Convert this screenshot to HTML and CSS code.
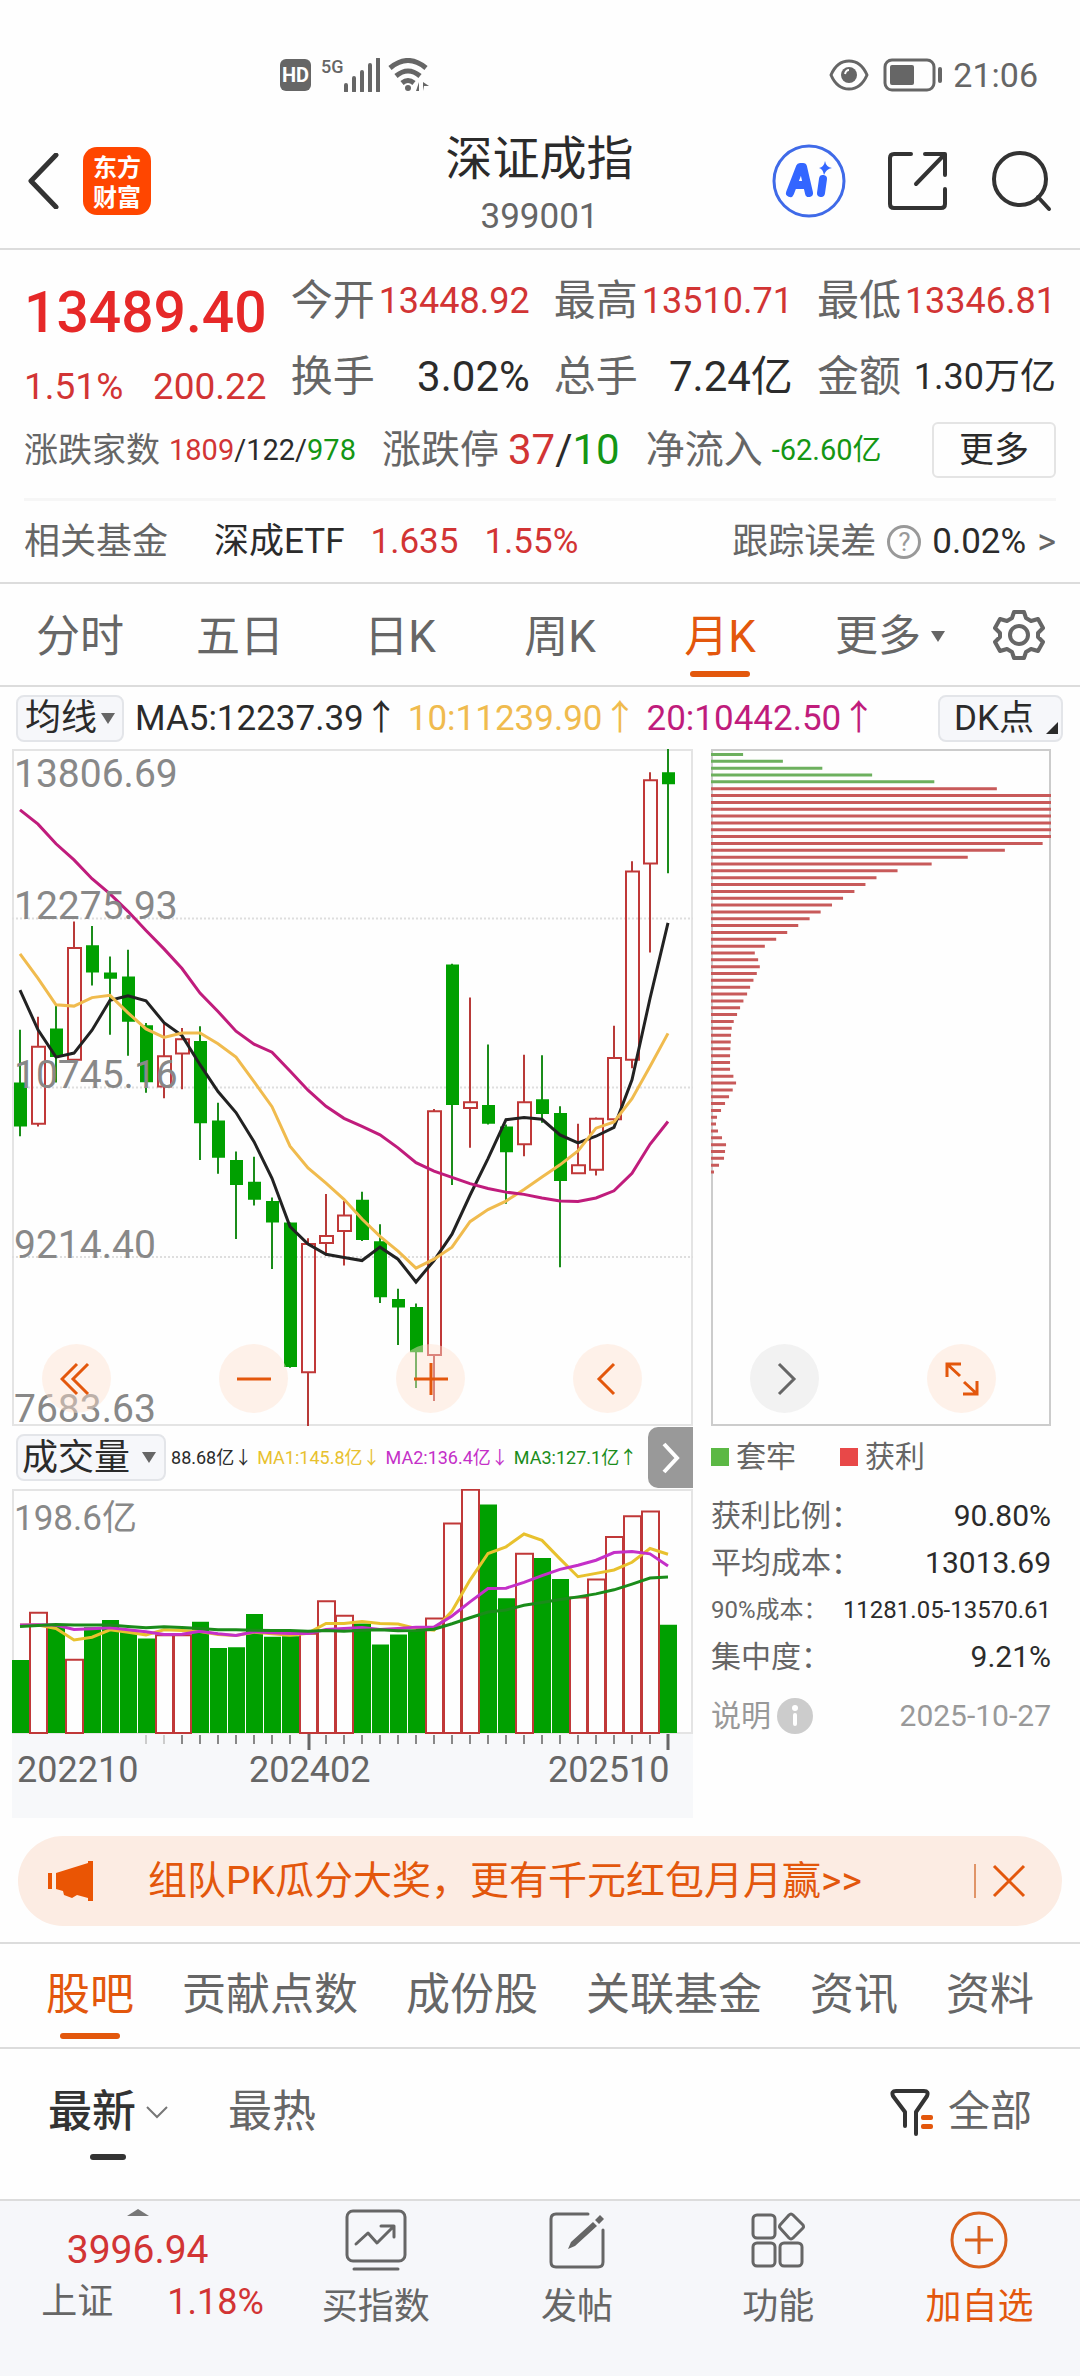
FILE: index.html
```html
<!DOCTYPE html>
<html lang="zh-CN">
<head>
<meta charset="utf-8">
<meta name="viewport" content="width=device-width, initial-scale=1">
<title>深证成指 399001</title>
<link rel="stylesheet" href="styles.css">
</head>
<body>
<div class="status">
  <div class="status-group status-left">
    <span class="hd">HD</span>
    <span class="net">5G</span>
    <svg width="36" height="34" viewBox="0 0 36 34"><path class="bars" d="M2 27V33M10 20V33M18 14V33M26 7V33M34 1V33"/></svg>
    <svg class="wifi" width="42" height="34" viewBox="0 0 42 34"><path class="arc" d="M2 10Q20 -5 38 10M8 18Q20 8 32 18M14 25Q20 20 26 25"/><circle cx="20" cy="30" r="3"/><path d="M31 24V33H28L31 24ZM35 33V24L41 28H36Z"/></svg>
  </div>
  <div class="status-group">
    <svg width="40" height="32" viewBox="0 0 40 32"><path class="line-mid" d="M2 16Q8 2 20 2T38 16Q32 30 20 30T2 16Z"/><circle cx="20" cy="16" r="8"/><path class="glint" d="M16 15Q17 11 20 11"/></svg>
    <svg class="battery" width="60" height="34" viewBox="0 0 60 34"><rect class="line-mid" x="2" y="2" width="49" height="30" rx="7"/><rect x="7" y="7" width="24" height="20" rx="2"/><rect x="55" y="9" width="4" height="16" rx="2"/></svg>
    <span class="clock">21:06</span>
  </div>
</div>

<header class="header">
  <div class="header-side">
    <button class="icon-btn" aria-label="返回"><svg width="32" height="56" viewBox="0 0 32 56"><path class="line-dark thick" d="M29 2L4 28L29 54"/></svg></button>
    <div class="logo"><span>东方</span><span>财富</span></div>
  </div>
  <div class="title">
    <h1>深证成指</h1>
    <p>399001</p>
  </div>
  <div class="header-side header-actions">
    <button class="icon-btn" aria-label="AI"><svg width="74" height="74" viewBox="0 0 74 74"><circle class="ai-ring" cx="37" cy="37" r="35"/><path class="ai-stroke" d="M18 49L28 23H31L37 49M22 41H34M51 35L49 49"/><path class="ai-fill" d="M53 17Q54 23 60 24Q54 25 52 31Q51 25 47 24Q52 23 53 17Z"/></svg></button>
    <button class="icon-btn" aria-label="分享"><svg width="62" height="62" viewBox="0 0 62 62"><path class="line-dark" d="M24 4H7Q3 4 3 8V54Q3 58 7 58H54Q58 58 58 54V39M38 4H58V25M57 5L29 34"/></svg></button>
    <button class="icon-btn" aria-label="搜索"><svg width="62" height="62" viewBox="0 0 62 62"><circle class="line-dark" cx="30" cy="29" r="26"/><path class="line-dark" d="M48 47L59 59"/></svg></button>
  </div>
</header>

<section class="quote">
  <div class="stats">
    <div class="price">
      <strong>13489.40</strong>
      <div class="change"><span>1.51%</span><span>200.22</span></div>
    </div>
    <div class="stat"><span>今开</span><b class="red small">13448.92</b></div>
    <div class="stat"><span>最高</span><b class="red small">13510.71</b></div>
    <div class="stat"><span>最低</span><b class="red small">13346.81</b></div>
    <div class="stat"><span>换手</span><b>3.02%</b></div>
    <div class="stat"><span>总手</span><b>7.24亿</b></div>
    <div class="stat"><span>金额</span><b class="small">1.30万亿</b></div>
  </div>
  <div class="breadth">
    <div class="pair"><span class="label-s">涨跌家数</span><span class="num-s"><i class="red">1809</i>/122/<i class="green">978</i></span></div>
    <div class="pair"><span class="label-m">涨跌停</span><span class="num-l"><i class="red">37</i>/<i class="green">10</i></span></div>
    <div class="pair"><span class="label-m">净流入</span><span class="num-s green">-62.60亿</span></div>
    <button class="more">更多</button>
  </div>
  <div class="funds">
    <span class="muted">相关基金</span>
    <span class="fund-name">深成ETF</span>
    <span class="red">1.635</span>
    <span class="red fund-pct">1.55%</span>
    <a class="track" href="#track"><span class="muted">跟踪误差</span><span class="help">?</span><span>0.02%</span><span class="muted">&gt;</span></a>
  </div>
</section>

<nav class="periods">
  <button>分时</button>
  <button>五日</button>
  <button>日K</button>
  <button>周K</button>
  <button class="active">月K</button>
  <button class="period-more">更多<span class="tri"></span></button>
  <button class="gear" aria-label="设置"><svg width="52" height="52" viewBox="0 0 52 52"><path class="line-mid" d="M21 3H31L33 9L38 12L45 10L50 19L45 24V28L50 33L45 42L38 40L33 43L31 49H21L19 43L14 40L7 42L2 33L7 28V24L2 19L7 10L14 12L19 9Z"/><circle class="line-mid" cx="26" cy="26" r="9"/></svg></button>
</nav>

<div class="indicators">
  <button class="chip">均线<span class="tri"></span></button>
  <span>MA5:12237.39↑</span>
  <span class="c-yellow">10:11239.90↑</span>
  <span class="c-magenta">20:10442.50↑</span>
  <button class="chip dk">DK点<span class="corner"></span></button>
</div>

<main class="charts">
  <div class="col-main">
    <div class="kline">
      <svg viewBox="12 22 681 1514" preserveAspectRatio="none">
        <path class="grid" d="M12 401H693M12 779H693M12 1158H693"/>
        <path class="wick g" d="M20 650V888M56 594V768M92 418V551M110 486V661M128 471V708M146 635V791M200 642V941M218 813V972M236 922V1118M254 934V1043M272 1025V1185M290 1081V1406M362 1012V1122M380 1085V1261M398 1229V1355M416 1262V1451M452 502V997M488 683V862M506 862V1039M542 707V858M560 821V1181M668 22V300"/>
        <path class="wick r" d="M38 621V688M38 860V866M74 408V467M74 717V722M164 635V709M164 777V803M182 646V671M182 703V783M308 1116V1129M308 1416V1536M326 1017V1111M326 1127V1155M344 1033V1065M344 1100V1177M434 827V832M434 1377V1480M470 578V812M470 825V914M524 706V812M524 906V933M578 860V953M596 846V849M596 963V976M614 641V713M614 850V855M632 273V296M632 717V736M650 74V92M650 278V477"/>
        <path class="body g" d="M14 768h13V866h-13zM50 647h13V711h-13zM86 461h13V522h-13zM104 522h13V536h-13zM122 531h13V632h-13zM140 640h13V767h-13zM194 675h13V859h-13zM212 853h13V936h-13zM230 941h13V997h-13zM248 990h13V1030h-13zM266 1033h13V1081h-13zM284 1081h13V1404h-13zM356 1030h13V1120h-13zM374 1123h13V1248h-13zM392 1252h13V1271h-13zM410 1270h13V1371h-13zM446 504h13V818h-13zM482 818h13V860h-13zM500 866h13V924h-13zM536 805h13V838h-13zM554 836h13V988h-13zM662 74h13V101h-13z"/>
        <path class="body r" d="M32 688h13V860h-13zM68 467h13V717h-13zM158 709h13V777h-13zM176 671h13V703h-13zM302 1129h13V1416h-13zM320 1111h13V1127h-13zM338 1065h13V1100h-13zM428 832h13V1377h-13zM464 812h13V825h-13zM518 812h13V906h-13zM572 953h13V971h-13zM590 849h13V963h-13zM608 713h13V850h-13zM626 296h13V717h-13zM644 92h13V278h-13z"/>
        <polyline class="ma dark" points="20,561 38,650 56,711 74,702 92,651 110,584 128,574 146,585 164,634 182,663 200,728 218,788 236,835 254,900 272,982 290,1090 308,1129 326,1152 344,1159 362,1166 380,1136 398,1163 416,1214 434,1166 452,1107 470,1020 488,938 506,851 524,846 542,850 560,885 578,903 596,888 614,868 632,762 650,580 668,411"/>
        <polyline class="ma yellow" points="20,480 38,535 56,594 74,597 92,578 110,573 128,612 146,648 164,667 182,657 200,657 218,681 236,711 254,766 272,822 290,910 308,959 326,993 344,1029 362,1073 380,1112 398,1145 416,1183 434,1163 452,1136 470,1079 488,1052 506,1033 524,1007 542,979 560,952 578,921 596,870 614,856 632,804 650,732 668,658"/>
        <polyline class="ma magenta" points="20,158 38,190 56,234 74,270 92,312 110,346 128,385 146,428 164,469 182,513 200,568 218,609 236,653 254,682 272,700 290,742 308,785 326,821 344,848 362,866 380,885 398,914 416,947 434,966 452,980 470,994 488,1005 506,1013 524,1018 542,1026 560,1033 578,1034 596,1026 614,1010 632,971 650,906 668,855"/>
      </svg>
      <ul class="scale">
        <li>13806.69</li><li>12275.93</li><li>10745.16</li><li>9214.40</li><li>7683.63</li>
      </ul>
    </div>
    <div class="vol-head">
      <button class="chip">成交量<span class="tri"></span></button>
      <span>88.68亿↓</span>
      <span class="c-gold">MA1:145.8亿↓</span>
      <span class="c-violet">MA2:136.4亿↓</span>
      <span class="c-green">MA3:127.1亿↑</span>
      <button class="toggle" aria-label="收起"><svg width="18" height="32" viewBox="0 0 18 32"><path d="M2 2L15 16L2 30"/></svg></button>
    </div>
    <div class="volume">
      <svg viewBox="12 207 681 729" preserveAspectRatio="none">
        <path class="body g" d="M12 716h17V933h-17zM48 612h17V933h-17zM84 618h17V933h-17zM102 597h17V933h-17zM120 630h17V933h-17zM138 652h17V933h-17zM192 602h17V933h-17zM210 680h17V933h-17zM228 678h17V933h-17zM246 579h17V933h-17zM264 647h17V933h-17zM282 645h17V933h-17zM354 607h17V933h-17zM372 670h17V933h-17zM390 640h17V933h-17zM408 627h17V933h-17zM480 253h17V933h-17zM498 532h17V933h-17zM534 412h17V933h-17zM552 475h17V933h-17zM660 611h17V933h-17z"/>
        <path class="body r" d="M30 575h17V933h-17zM66 715h17V933h-17zM156 642h17V933h-17zM174 642h17V933h-17zM300 638h17V933h-17zM318 541h17V933h-17zM336 584h17V933h-17zM426 592h17V933h-17zM444 310h17V933h-17zM462 209h17V933h-17zM516 400h17V933h-17zM570 530h17V933h-17zM588 476h17V933h-17zM606 350h17V933h-17zM624 288h17V933h-17zM642 274h17V933h-17z"/>
        <polyline class="ma gold" points="20,612 38,612 56,622 74,656 92,648 110,626 128,633 146,641 164,626 182,628 200,631 218,640 236,643 254,633 272,638 290,642 308,636 326,607 344,607 362,601 380,607 398,609 416,622 434,627 452,570 470,478 488,399 506,379 524,341 542,360 560,415 578,468 596,458 614,448 632,425 650,384 668,401"/>
        <polyline class="ma violet" points="20,612 38,611 56,612 74,625 92,623 110,620 128,626 146,632 164,640 182,639 200,630 218,638 236,643 254,632 272,635 290,637 308,637 326,625 344,622 362,619 380,625 398,622 416,618 434,618 452,585 470,543 488,503 506,502 524,485 542,465 560,446 578,434 596,419 614,396 632,393 650,400 668,436"/>
        <polyline class="ma leaf" points="20,616 38,613 56,610 74,612 92,612 110,612 128,616 146,620 164,617 182,619 200,622 218,626 236,626 254,627 272,628 290,628 308,630 326,628 344,630 362,627 380,626 398,629 416,628 434,624 452,608 470,590 488,573 506,567 524,553 542,545 560,536 578,528 596,519 614,507 632,490 650,472 668,469"/>
      </svg>
      <span class="vol-max">198.6亿</span>
    </div>
    <div class="axis">
      <svg viewBox="12 0 681 16" preserveAspectRatio="none">
        <path class="tick faint" d="M146 1V10M164 1V10"/>
        <path class="tick" d="M182 1V10M200 1V10M218 1V10M236 1V10M254 1V10M272 1V10M290 1V10M326 1V10M344 1V10M362 1V10M380 1V10M398 1V10M416 1V10M434 1V10M452 1V10M470 1V10M488 1V10M506 1V10M524 1V10M542 1V10M560 1V10M578 1V10M596 1V10M614 1V10M632 1V10M650 1V10"/>
        <path class="tick major" d="M309 0V16M668 0V16"/>
      </svg>
      <div class="dates"><span>202210</span><span>202402</span><span>202510</span></div>
    </div>
  </div>

  <div class="col-side">
    <div class="chips">
      <svg viewBox="33 -8 1017 989" preserveAspectRatio="none">
        <path class="bar up" d="M33 0H129M33 10H248M33 20H366M33 30H515M33 40H701"/>
        <path class="bar down" d="M33 50H888M33 60H1050M33 70H1050M33 80H1050M33 90H1050M33 100H1050M33 110H1050M33 120H1050M33 130H1025M33 140H912M33 150H801M33 160H693M33 170H591M33 180H528M33 190H495M33 200H462M33 210H428M33 220H395M33 230H361M33 240H328M33 250H294M33 260H261M33 270H228M33 280H194M33 290H164M33 300H174M33 310H179M33 320H170M33 330H160M33 340H150M33 350H141M33 360H130M33 370H120M33 380H111M33 390H101M33 400H95M33 410H93M33 420H92M33 430H91M33 440H90M33 450H90M33 460H90M33 470H100M33 480H108M33 490H98M33 500H87M33 510H75M33 520H63M33 530H51M33 540H48M33 550H54M33 560H66M33 570H78M33 580H75M33 590H72M33 600H57M33 610H42"/>
      </svg>
    </div>
    <div class="legend"><span><i class="sq sq-green"></i>套牢</span><span><i class="sq sq-red"></i>获利</span></div>
    <dl class="cost">
      <div><dt>获利比例：</dt><dd>90.80%</dd></div>
      <div><dt>平均成本：</dt><dd>13013.69</dd></div>
      <div class="tight"><dt>90%成本：</dt><dd>11281.05-13570.61</dd></div>
      <div><dt>集中度：</dt><dd>9.21%</dd></div>
    </dl>
    <div class="note">
      <a href="#help">说明<svg width="36" height="36" viewBox="0 0 36 36"><circle class="info-bg" cx="18" cy="18" r="18"/><circle class="info-fg" cx="18" cy="10" r="3"/><rect class="info-fg" x="16" y="15" width="4" height="13" rx="2"/></svg></a>
      <time>2025-10-27</time>
    </div>
  </div>

  <div class="controls">
    <button aria-label="最早"><svg width="34" height="34" viewBox="0 0 34 34"><path d="M17 2L2 17L17 32M28 2L13 17L28 32"/></svg></button>
    <button aria-label="缩小"><svg width="34" height="34" viewBox="0 0 34 34"><path d="M0 17H34"/></svg></button>
    <button aria-label="放大"><svg width="34" height="34" viewBox="0 0 34 34"><path d="M0 17H34M17 1V33"/></svg></button>
    <button aria-label="向左"><svg width="34" height="34" viewBox="0 0 34 34"><path d="M23 2L8 17L23 32"/></svg></button>
    <button class="off" aria-label="向右"><svg width="34" height="34" viewBox="0 0 34 34"><path d="M11 2L26 17L11 32"/></svg></button>
    <button aria-label="全屏"><svg width="34" height="34" viewBox="0 0 34 34"><path d="M16 2H2V15M2 2L15 14M18 32H32V19M32 32L19 20"/></svg></button>
  </div>
</main>

<aside class="banner">
  <svg width="46" height="40" viewBox="0 0 46 40"><path d="M0 12H4V28H0ZM8 12L40 2V0H45V40H40V37L29 34L24 37L16 34L15 30L8 28Z"/></svg>
  <a href="#promo">组队PK瓜分大奖，更有千元红包月月赢&gt;&gt;</a>
  <button aria-label="关闭"><svg width="34" height="34" viewBox="0 0 34 34"><path class="cross" d="M2 2L32 32M32 2L2 32"/></svg></button>
</aside>

<nav class="sections">
  <a class="active" href="#bar">股吧</a>
  <a href="#contrib">贡献点数</a>
  <a href="#members">成份股</a>
  <a href="#funds">关联基金</a>
  <a href="#news">资讯</a>
  <a href="#profile">资料</a>
</nav>

<div class="filters">
  <button class="active">最新<svg width="22" height="14" viewBox="0 0 22 14"><path d="M1 2L11 12L21 2"/></svg></button>
  <button>最热</button>
  <button class="all"><svg width="44" height="48" viewBox="0 0 44 48"><path class="line-dark" d="M15 38V24L3 8Q1 3 6 3H34Q39 3 37 8L26 24V46"/><rect class="accent" x="31" y="27" width="12" height="5" rx="2"/><rect class="accent" x="31" y="36" width="12" height="5" rx="2"/></svg>全部</button>
</div>

<footer class="tabbar">
  <a class="index" href="#sh">
    <span class="tri-up"></span>
    <strong>3996.94</strong>
    <span class="index-row"><span>上证</span><span class="red">1.18%</span></span>
  </a>
  <a href="#buy"><svg width="62" height="62" viewBox="0 0 62 62"><rect class="line-mid" x="2" y="2" width="58" height="50" rx="6"/><path class="line-mid" d="M11 35L23 24L32 34L48 18M36 17H49V28M9 60H53"/></svg>买指数</a>
  <a href="#post"><svg width="62" height="62" viewBox="0 0 62 62"><path class="line-mid" d="M42 5H10Q5 5 5 10V53Q5 58 10 58H52Q57 58 57 53V21"/><path d="M22 40L25 33L47 13L51 17L29 37ZM49 11L54 6L58 10L53 15Z"/></svg>发帖</a>
  <a href="#tools"><svg width="62" height="62" viewBox="0 0 62 62"><rect class="line-mid" x="6" y="6" width="22" height="23" rx="4"/><rect class="line-mid" x="6" y="34" width="22" height="23" rx="4"/><rect class="line-mid" x="33" y="34" width="22" height="23" rx="4"/><path class="line-mid" d="M42 6Q44 4 46 6L56 16Q57 18 56 19L46 29Q44 31 42 29L33 19Q32 18 33 16Z"/></svg>功能</a>
  <a class="add" href="#add"><svg width="62" height="62" viewBox="0 0 62 62"><circle cx="31" cy="31" r="27"/><path d="M17 31H45M31 17V45"/></svg>加自选</a>
</footer>
</body>
</html>
```
FILE: styles.css
```css
* { box-sizing: border-box; }

body {
  margin: 0;
  background: #fefefe;
  color: #2b2b2b;
  font-family: Roboto, "Noto Sans CJK SC", sans-serif;
  font-size: 36px;
  line-height: 1;
}

button {
  margin: 0;
  padding: 0;
  border: 0;
  background: none;
  color: inherit;
  font: inherit;
  cursor: pointer;
}

a { color: inherit; text-decoration: none; }
i { font-style: normal; }
h1, p, ul, dl, dd { margin: 0; padding: 0; font-weight: 400; }
svg { display: block; flex: none; }

.red { color: #d23434; }
.green { color: #149614; }
.muted { color: #666; }
.c-yellow { color: #f0bb4e; }
.c-magenta { color: #c01c7c; }
.c-gold { color: #e8c12e; }
.c-violet { color: #c430c8; }
.c-green { color: #1a8c1a; }

.line-dark, .line-mid { fill: none; stroke: #333; stroke-width: 4; stroke-linecap: round; stroke-linejoin: round; }
.line-mid { stroke: #666; stroke-width: 3; }
.line-dark.thick { stroke-width: 5; }

/* status bar */
.status {
  display: flex;
  justify-content: space-between;
  align-items: center;
  height: 114px;
  padding: 36px 42px 0 280px;
  color: #666;
  fill: #666;
}
.status-group { display: flex; align-items: center; }
.hd {
  width: 31px;
  border-radius: 6px;
  background: #666;
  color: #fff;
  font-size: 20px;
  font-weight: 700;
  line-height: 32px;
  text-align: center;
}
.net { align-self: flex-start; margin-left: 10px; font-size: 18px; font-weight: 500; }
.bars { stroke: #666; stroke-width: 4; stroke-linecap: round; }
.wifi { margin-left: 8px; }
.arc { fill: none; stroke: #666; stroke-width: 5; }
.glint { fill: none; stroke: #fff; stroke-width: 2; }
.battery { margin: 0 10px 0 14px; }
.clock { font-size: 34px; }

/* header */
.header {
  display: grid;
  grid-template-columns: 1fr auto 1fr;
  align-items: center;
  height: 136px;
  padding: 0 28px 0 27px;
  border-bottom: 2px solid #dcdcdc;
}
.header-side { display: flex; align-items: center; gap: 24px; }
.header-actions { justify-content: flex-end; gap: 41px; }
.logo {
  display: flex;
  flex-direction: column;
  justify-content: center;
  align-items: center;
  width: 68px;
  height: 68px;
  border-radius: 14px;
  background: #ff4600;
  color: #fff;
  font-family: "Noto Sans CJK SC", sans-serif;
  font-size: 24px;
  font-weight: 700;
  line-height: 30px;
}
.title { padding-top: 8px; text-align: center; }
.title h1 { font-size: 47px; line-height: 64px; }
.title p { color: #666; font-size: 35px; line-height: 52px; }
.ai-ring { fill: none; stroke: #3f6ae8; stroke-width: 3; }
.ai-stroke { fill: none; stroke: #3366ff; stroke-width: 8; stroke-linecap: round; stroke-linejoin: round; }
.ai-fill { fill: #3366ff; }

/* quote */
.quote { padding: 12px 24px 0; border-bottom: 2px solid #dcdcdc; }
.stats {
  display: grid;
  grid-template-columns: repeat(4, 1fr);
  grid-auto-rows: 76px;
  column-gap: 24px;
}
.price { grid-row: span 2; padding-top: 18px; color: #e62828; }
.price strong { display: block; font-size: 57px; font-weight: 500; line-height: 66px; }
.change {
  display: flex;
  justify-content: space-between;
  margin-top: 14px;
  color: #d23434;
  font-size: 37px;
  line-height: 54px;
}
.stat { display: flex; justify-content: space-between; align-items: center; padding-top: 2px; white-space: nowrap; }
.stat span { color: #666; font-size: 42px; }
.stat b { font-size: 42px; font-weight: 400; }
.stat .small { font-size: 36px; }
.breadth { display: flex; align-items: center; gap: 26px; height: 72px; white-space: nowrap; }
.pair { display: flex; align-items: center; gap: 9px; }
.label-s { color: #666; font-size: 34px; }
.label-m { color: #666; font-size: 39px; }
.num-s { font-size: 29px; }
.num-l { font-size: 42px; }
.more {
  width: 124px;
  height: 56px;
  margin-left: auto;
  border: 2px solid #e4e4e4;
  border-radius: 6px;
  font-size: 35px;
}
.funds {
  display: flex;
  align-items: center;
  height: 84px;
  margin-top: 12px;
  border-top: 3px solid #f6f6f6;
  font-size: 35px;
  white-space: nowrap;
}
.funds .muted { font-size: 36px; }
.fund-name { margin: 0 26px 0 46px; }
.fund-pct { margin-left: 26px; }
.track { display: flex; align-items: center; gap: 11px; margin-left: auto; }
.help {
  width: 34px;
  height: 34px;
  border: 3px solid #999;
  border-radius: 50%;
  color: #999;
  font-size: 26px;
  line-height: 28px;
  text-align: center;
}

/* period tabs */
.tri { border: 7px solid transparent; border-top: 11px solid #666; border-bottom: 0; }
.periods {
  display: grid;
  grid-template-columns: repeat(5, 16fr) 18fr 10fr;
  height: 103px;
  border-bottom: 2px solid #dcdcdc;
  color: #666;
  font-size: 44px;
}
.periods button { display: flex; justify-content: center; align-items: center; padding-top: 4px; }
.periods .period-more { gap: 10px; font-size: 43px; }
.periods .gear { justify-content: flex-start; padding: 0 0 0 13px; }
.gear .line-mid { stroke-width: 4; }
.active { position: relative; }
.active::after {
  content: "";
  position: absolute;
  bottom: 8px;
  left: 50%;
  width: 60px;
  height: 6px;
  margin-left: -30px;
  border-radius: 3px;
  background: #e3570c;
}
.periods .active, .sections .active { color: #e3570c; }

/* indicator row */
.chip {
  display: flex;
  align-items: center;
  gap: 4px;
  height: 47px;
  padding: 0 7px 0 7px;
  border: 2px solid #e3e5e9;
  border-radius: 8px;
  background: #f6f7fa;
  font-size: 36px;
}
.indicators {
  display: flex;
  align-items: center;
  gap: 9px;
  height: 62px;
  padding: 0 17px 0 16px;
  font-size: 35px;
  white-space: nowrap;
}
.indicators .chip { margin-right: 2px; }
.indicators .dk { gap: 12px; margin: 0 0 0 auto; padding: 0 3px 0 14px; font-size: 35px; }
.corner { margin-top: 20px; border: 6px solid #2b2b2b; border-top-color: transparent; border-left-color: transparent; }

/* charts */
.charts {
  position: relative;
  display: grid;
  grid-template-columns: 681fr 340fr;
  column-gap: 18px;
  padding: 0 29px 0 12px;
}
.charts svg * { vector-effect: non-scaling-stroke; }
.kline, .volume { position: relative; box-shadow: inset 0 0 0 2px #e4e4e4; }
.kline { aspect-ratio: 681 / 677; }
.kline > svg, .volume > svg, .chips > svg { width: 100%; height: 100%; }
.grid { fill: none; stroke: #dedede; stroke-width: 2; stroke-dasharray: 2 2; }
.wick { fill: none; stroke-width: 2; }
.wick.g { stroke: #1a8c1a; }
.wick.r { stroke: #b83a38; }
.body.g { fill: #00a000; }
.body.r { fill: none; stroke: #c03838; stroke-width: 2; }
.volume .body.r { fill: #fefefe; }
.ma { fill: none; stroke-width: 3; }
.dark { stroke: #222; }
.yellow { stroke: #f0bb4e; }
.magenta { stroke: #c01c7c; }
.gold { stroke: #e8c12e; }
.violet { stroke: #c430c8; }
.leaf { stroke: #1a8c1a; }
.scale { color: #888; font-size: 39px; line-height: 38px; list-style: none; }
.scale li { position: absolute; left: 2px; }
.scale li:nth-child(1) { top: 6px; }
.scale li:nth-child(2) { bottom: 74%; }
.scale li:nth-child(3) { bottom: 49%; }
.scale li:nth-child(4) { bottom: 24%; }
.scale li:nth-child(5) { bottom: -2px; }

.vol-head {
  display: flex;
  align-items: center;
  gap: 5px;
  height: 63px;
  padding-left: 4px;
  font-size: 18px;
  white-space: nowrap;
}
.vol-head .chip { gap: 12px; padding: 0 8px 0 4px; }
.toggle {
  display: flex;
  justify-content: center;
  align-items: center;
  width: 45px;
  height: 61px;
  margin-left: auto;
  border-radius: 10px 0 0 10px;
  background: #999;
}
.toggle path { fill: none; stroke: #fff; stroke-width: 4; }
.volume { aspect-ratio: 681 / 245; }
.vol-max { position: absolute; top: 12px; left: 2px; color: #888; font-size: 35px; }
.axis { height: 84px; background: #f7f8fa; }
.axis svg { width: 100%; height: 16px; }
.tick { stroke: #888; stroke-width: 2; }
.tick.faint { stroke: #ccc; }
.tick.major { stroke: #666; stroke-width: 3; }
.dates {
  display: grid;
  grid-template-columns: 232fr 299fr 145fr;
  padding-left: 5px;
  color: #666;
  line-height: 40px;
}

.chips { aspect-ratio: 340 / 677; box-shadow: inset 0 0 0 2px #ccc; }
.bar { fill: none; stroke-width: 3; }
.bar.up { stroke: #6db05e; }
.bar.down { stroke: #c85a5a; }
.legend { display: flex; height: 62px; color: #666; font-size: 30px; }
.legend span { display: flex; align-items: center; gap: 7px; margin-right: 44px; }
.sq { width: 18px; height: 18px; }
.sq-green { background: #5bb844; }
.sq-red { background: #e84848; }
.cost { padding-top: 4px; font-size: 30px; white-space: nowrap; }
.cost div { display: flex; justify-content: space-between; align-items: center; height: 47px; }
.cost dt { color: #666; }
.cost .tight { font-size: 24px; }
.note {
  display: flex;
  justify-content: space-between;
  align-items: center;
  height: 36px;
  margin-top: 18px;
  color: #999;
  font-size: 30px;
}
.note a { display: flex; align-items: center; gap: 6px; }
.info-bg { fill: #ccc; }
.info-fg { fill: #fff; }

.controls {
  position: absolute;
  top: 595px;
  left: 42px;
  right: 84px;
  display: flex;
  justify-content: space-between;
}
.controls button {
  display: flex;
  justify-content: center;
  align-items: center;
  width: 69px;
  height: 69px;
  border-radius: 50%;
  background: rgba(255, 226, 209, .45);
}
.controls path { fill: none; stroke: #e3570c; stroke-width: 3; }
.controls .off { background: #f2f2f2; }
.controls .off path { stroke: #666; }

/* banner */
.banner {
  display: flex;
  align-items: center;
  height: 90px;
  margin: 18px 18px 16px;
  padding: 0 36px 0 30px;
  border-radius: 45px;
  background: #fcece3;
  color: #e3570c;
  fill: #ea5504;
}
.banner a { margin-left: 54px; font-size: 39px; white-space: nowrap; }
.banner button { margin-left: auto; padding-left: 16px; border-left: 2px solid #e09468; }
.cross { fill: none; stroke: #e3570c; stroke-width: 3; }

/* content tabs */
.sections {
  display: flex;
  justify-content: space-between;
  padding: 0 46px;
  border-top: 2px solid #dcdcdc;
  border-bottom: 2px solid #dcdcdc;
  color: #666;
  font-size: 44px;
  line-height: 103px;
  white-space: nowrap;
}
.filters {
  display: flex;
  align-items: center;
  height: 150px;
  padding: 0 48px;
  color: #666;
  font-size: 44px;
}
.filters button { display: flex; align-items: center; height: 100px; margin-right: 60px; padding-bottom: 24px; }
.filters .active { gap: 10px; color: #333; font-weight: 500; }
.filters .active path { fill: none; stroke: #777; stroke-width: 2; }
.filters .active::after { bottom: 14px; width: 36px; margin-left: -18px; background: #333; }
.filters .all { gap: 14px; margin: 0 0 0 auto; font-size: 42px; }
.accent { fill: #e3570c; }

/* bottom bar */
.tabbar {
  display: grid;
  grid-template-columns: 275fr repeat(4, 201fr);
  height: 177px;
  border-top: 2px solid #dcdcdc;
  background: #f6f7fa;
  color: #666;
  fill: #666;
}
.tabbar a { display: flex; flex-direction: column; align-items: center; gap: 18px; padding-top: 8px; }
.tabbar .index { gap: 0; }
.tri-up { border: 11px solid transparent; border-top: 0; border-bottom: 7px solid #777; }
.index strong { color: #d23434; font-size: 39px; font-weight: 400; line-height: 68px; }
.index-row { display: flex; gap: 54px; padding-left: 30px; }
.tabbar .add { color: #e3570c; }
.add svg { fill: none; stroke: #d8601c; stroke-width: 3; }
```
